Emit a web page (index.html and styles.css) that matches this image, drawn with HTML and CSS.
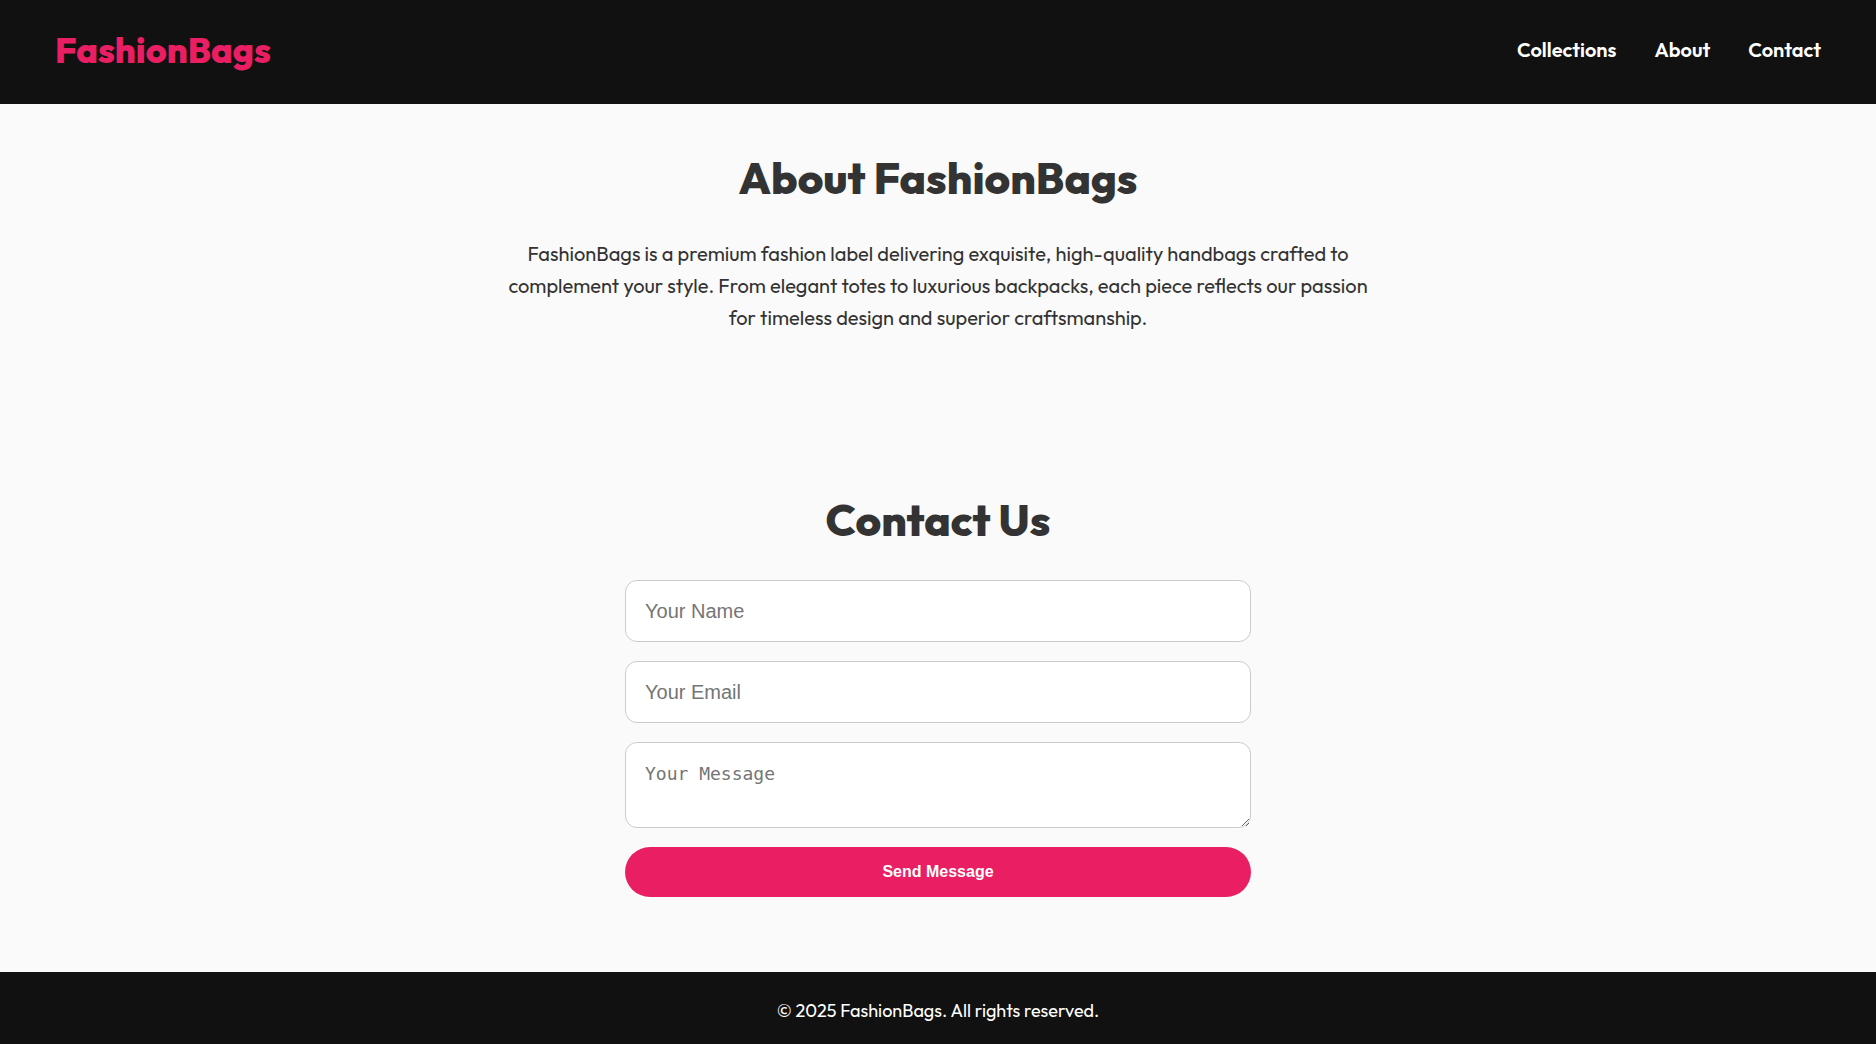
FILE: index.html
```html
<!DOCTYPE html>
<html lang="en">
<head>
  <meta charset="UTF-8">
  <meta name="viewport" content="width=device-width, initial-scale=1">
  <title>FashionBags</title>
  <link rel="stylesheet" href="styles.css">
</head>
<body>
  <header class="site-header">
    <div class="logo">FashionBags</div>
    <nav class="site-nav">
      <a href="#collections">Collections</a>
      <a href="#about">About</a>
      <a href="#contact">Contact</a>
    </nav>
  </header>
  <main>
    <section class="about" id="about">
      <h2>About FashionBags</h2>
      <p>FashionBags is a premium fashion label delivering exquisite, high-quality handbags crafted to complement your style. From elegant totes to luxurious backpacks, each piece reflects our passion for timeless design and superior craftsmanship.</p>
    </section>
    <section class="contact" id="contact">
      <h2>Contact Us</h2>
      <form class="contact-form">
        <input type="text" placeholder="Your Name" aria-label="Your Name" required>
        <input type="email" placeholder="Your Email" aria-label="Your Email" required>
        <textarea placeholder="Your Message" aria-label="Your Message" rows="2" required></textarea>
        <button type="submit">Send Message</button>
      </form>
    </section>
  </main>
  <footer class="site-footer">
    <p>© 2025 FashionBags. All rights reserved.</p>
  </footer>
</body>
</html>
```
FILE: styles.css
```css
* {
  box-sizing: border-box;
  margin: 0;
  padding: 0;
}

body {
  display: flex;
  flex-direction: column;
  min-height: 100vh;
  background: #fafafa;
  color: #333;
  font-family: Outfit, Lato, sans-serif;
  font-size: 20px;
  line-height: 32px;
}

main {
  flex: 1;
}

.site-header {
  display: flex;
  align-items: center;
  justify-content: space-between;
  padding: 24px 55px 28px;
  background: #111;
}

.logo {
  color: #e91e63;
  font-size: 36px;
  font-weight: 800;
  line-height: 52px;
}

.site-nav {
  display: flex;
  gap: 38px;
}

.site-nav a {
  color: #fff;
  font-weight: 600;
  text-decoration: none;
}

h2 {
  margin-bottom: 35px;
  font-size: 44px;
  font-weight: 800;
  line-height: 51px;
}

.about,
.contact {
  padding: 48px 20px 75px;
  text-align: center;
}

.about {
  padding-bottom: 112px;
}

.about p {
  max-width: 875px;
  margin: 0 auto;
}

.contact-form {
  display: flex;
  flex-direction: column;
  gap: 19px;
  max-width: 626px;
  margin: 0 auto;
}

.contact-form input,
.contact-form textarea {
  padding: 19px;
  border: 1px solid #ccc;
  border-radius: 12px;
  background: #fff;
  font-family: "Liberation Sans", Arial, sans-serif;
  font-size: 20px;
}

.contact-form input {
  height: 62px;
}

.contact-form textarea {
  font-family: Consolas, "DejaVu Sans Mono", monospace;
  font-size: 18px;
  line-height: 23px;
  resize: vertical;
}

.contact-form ::placeholder {
  color: #757575;
}

.contact-form button {
  padding: 15px;
  border: 0;
  border-radius: 25px;
  background: #e91e63;
  color: #fff;
  font-family: "Liberation Sans", Arial, sans-serif;
  font-size: 16px;
  font-weight: 700;
  line-height: 20px;
  cursor: pointer;
}

.site-footer {
  padding: 24px 22px 20px;
  background: #111;
  color: #fff;
  font-size: 18px;
  line-height: 29px;
  text-align: center;
}
```
